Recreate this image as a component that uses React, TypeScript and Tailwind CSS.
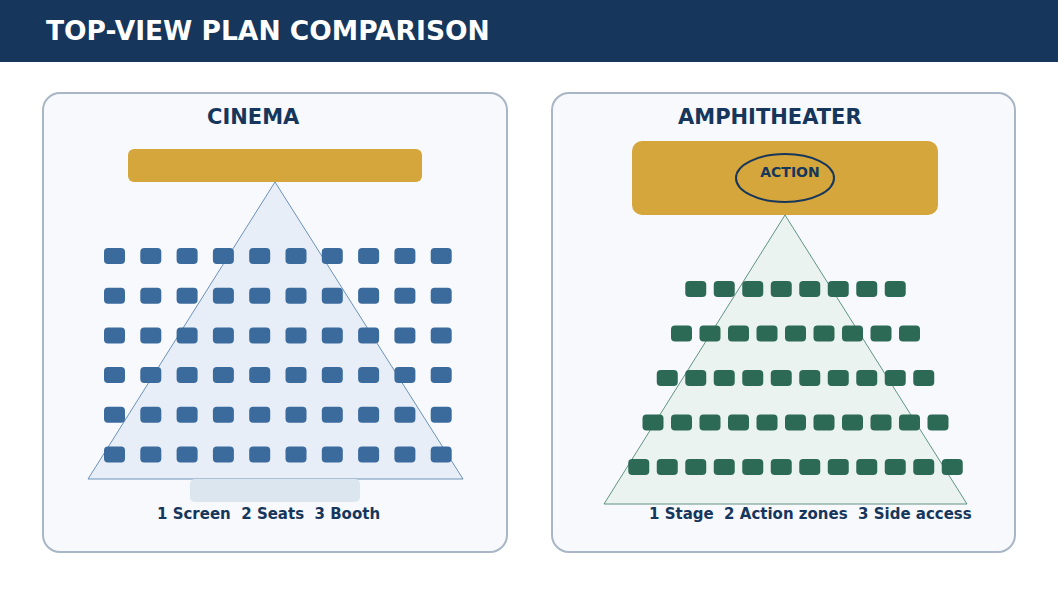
const font = { fontFamily: '"DejaVu Sans", "Liberation Sans", sans-serif' }

function CinemaPlan() {
  const rows = [0, 1, 2, 3, 4, 5]
  const cols = [0, 1, 2, 3, 4, 5, 6, 7, 8, 9]
  return (
    <svg width="462" height="372" viewBox="0 0 462 372" className="block overflow-visible">
      <rect x="84" y="18" width="294" height="33" rx="6" fill="#d4a63b" />
      <polygon points="231,51 44,348 419,348" fill="#e7eef7" stroke="#4a78a8" strokeWidth="0.8" />
      {rows.map((r) =>
        cols.map((c) => (
          <rect
            key={`${r}-${c}`}
            x={60 + c * 36.3}
            y={117 + r * 39.7}
            width="21"
            height="16"
            rx="4"
            fill="#3b6a9d"
          />
        ))
      )}
      <rect x="146" y="348" width="170" height="23" rx="5" fill="#dce6ef" />
    </svg>
  )
}

function AmphiPlan() {
  const rows = [0, 1, 2, 3, 4]
  return (
    <svg width="461" height="372" viewBox="0 0 461 372" className="block overflow-visible">
      <rect x="79" y="10" width="306" height="74" rx="10" fill="#d4a63b" />
      <ellipse cx="232" cy="47" rx="49" ry="24" fill="none" stroke="#16365c" strokeWidth="2" />
      <text
        x="237"
        y="46"
        textAnchor="middle"
        fontSize="14"
        fontWeight="700"
        fill="#16365c"
        style={font}
      >
        ACTION
      </text>
      <polygon points="232,84 51,373 414,373" fill="#eaf3ef" stroke="#3c7a66" strokeWidth="0.8" />
      {rows.map((r) => {
        const n = 8 + r
        const start = 242.5 - ((n - 1) * 28.5 + 21) / 2
        return Array.from({ length: n }).map((_, i) => (
          <rect
            key={`${r}-${i}`}
            x={start + i * 28.5}
            y={150 + r * 44.5}
            width="21"
            height="16"
            rx="4"
            fill="#2c6a55"
          />
        ))
      })}
    </svg>
  )
}

export default function App() {
  return (
    <div className="w-[1058px] h-[595px] bg-white overflow-hidden" style={font}>
      {/* Header */}
      <div className="h-[62px] bg-[#16365c] flex items-center pl-[46px]">
        <h1 className="text-[26.5px] font-bold text-white leading-none">TOP-VIEW PLAN COMPARISON</h1>
      </div>

      {/* Cards */}
      <div className="flex gap-[43px] px-[42px] pt-[30px]">
        <div className="flex-1 h-[461px] rounded-[18px] border-2 border-[#a9b6c5] bg-[#f7f9fd] flex flex-col">
          <h2 className="mt-[9px] ml-[163px] text-[21px] leading-[28px] font-bold text-[#16365c]">CINEMA</h2>
          <CinemaPlan />
          <p className="ml-[113px] mt-px text-[15px] leading-[20px] font-bold text-[#16365c] whitespace-pre">
            1 Screen  2 Seats  3 Booth
          </p>
        </div>

        <div className="flex-1 h-[461px] rounded-[18px] border-2 border-[#a9b6c5] bg-[#f7f9fd] flex flex-col">
          <h2 className="mt-[9px] ml-[125px] text-[21px] leading-[28px] font-bold text-[#16365c]">AMPHITHEATER</h2>
          <AmphiPlan />
          <p className="ml-[96px] mt-px text-[15px] leading-[20px] font-bold text-[#16365c] whitespace-pre relative">
            1 Stage  2 Action zones  3 Side access
          </p>
        </div>
      </div>
    </div>
  )
}
